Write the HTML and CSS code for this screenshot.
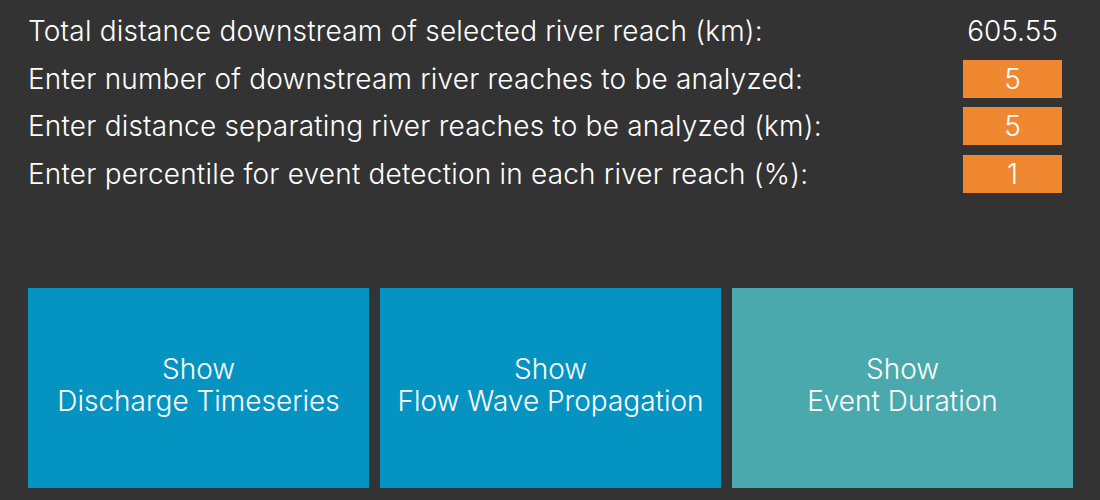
FILE: index.html
```html
<!DOCTYPE html>
<html>
<head>
<meta charset="utf-8">
<link rel="stylesheet" href="styles.css">
</head>
<body>
<div class="app">
  <div class="form">
    <div class="row">
      <span class="label">Total distance downstream of selected river reach (km):</span>
      <span class="value">605.55</span>
    </div>
    <div class="row">
      <span class="label">Enter number of downstream river reaches to be analyzed:</span>
      <span class="input">5</span>
    </div>
    <div class="row">
      <span class="label">Enter distance separating river reaches to be analyzed (km):</span>
      <span class="input">5</span>
    </div>
    <div class="row">
      <span class="label">Enter percentile for event detection in each river reach (%):</span>
      <span class="input">1</span>
    </div>
  </div>
  <div class="buttons">
    <div class="btn blue">Show<br>Discharge Timeseries</div>
    <div class="btn blue">Show<br>Flow Wave Propagation</div>
    <div class="btn teal">Show<br>Event Duration</div>
  </div>
</div>
</body>
</html>
```
FILE: styles.css
```css
html, body {
  margin: 0;
  padding: 0;
  background: #333333;
}
body {
  width: 1100px;
  height: 500px;
  overflow: hidden;
  font-family: Inter, "Noto Sans", sans-serif;
  font-weight: 300;
  color: #ffffff;
}
.app {
  padding: 12px 27px 0 28px;
  display: flex;
  flex-direction: column;
}
.form {
  display: flex;
  flex-direction: column;
  gap: 9.5px;
  height: 276px;
  padding-right: 11px;
}
.row {
  display: flex;
  justify-content: space-between;
  align-items: center;
  height: 38px;
}
.label {
  font-size: 28px;
  line-height: 38px;
  letter-spacing: 0.2px;
}
.value {
  width: 99px;
  text-align: center;
  font-size: 28px;
  line-height: 38px;
}
.input {
  width: 99px;
  height: 38px;
  background: #f08731;
  text-align: center;
  font-size: 28px;
  line-height: 38px;
}
.buttons {
  display: flex;
  gap: 11px;
}
.btn {
  flex: 0 0 341px;
  height: 200px;
  box-sizing: border-box;
  padding-bottom: 6px;
  display: flex;
  align-items: center;
  justify-content: center;
  text-align: center;
  font-size: 28px;
  line-height: 32px;
}
.blue { background: #0593c2; }
.teal { background: #49a9ad; }
```
